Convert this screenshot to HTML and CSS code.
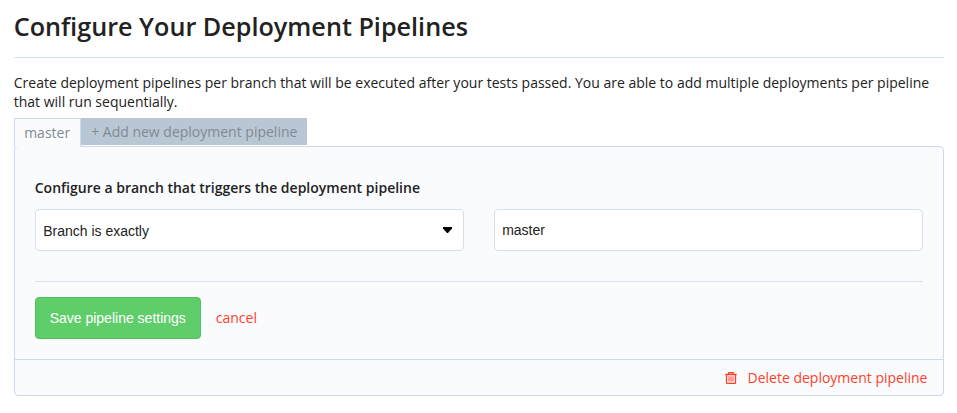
FILE: index.html
```html
<!DOCTYPE html>
<html lang="en">
<head>
<meta charset="utf-8">
<title>Deployment Pipelines</title>
<link rel="stylesheet" href="styles.css">
</head>
<body>
<main class="page">
  <h1 class="title">Configure Your Deployment Pipelines</h1>
  <p class="intro">Create deployment pipelines per branch that will be executed after your tests passed. You are able to add multiple deployments per pipeline that will run sequentially.</p>
  <nav class="tabs">
    <a class="tab tab-active">master</a>
    <a class="tab tab-add">+ Add new deployment pipeline</a>
  </nav>
  <section class="panel">
    <form class="panel-body">
      <h2 class="label">Configure a branch that triggers the deployment pipeline</h2>
      <div class="fields">
        <div class="field select">
          <span>Branch is exactly</span>
          <svg class="caret" width="9" height="6" viewBox="0 0 9 6"><path d="M0 0h9v1.5L5 6H4L0 1.5z"/></svg>
        </div>
        <input class="field" type="text" value="master">
      </div>
      <div class="actions">
        <button class="save" type="button">Save pipeline settings</button>
        <a class="link cancel">cancel</a>
      </div>
    </form>
    <footer class="panel-footer">
      <svg class="trash" width="12" height="12" viewBox="0 0 12 12" fill="none" stroke="currentColor"><path d="M.3 2.5h11.4M3.5 2.5v-1q0-1 1-1h3q1 0 1 1v1M1.5 2.5v8q0 1 1 1h7q1 0 1-1v-8" stroke-width="1.3"/><path d="M4 4.3v5.2M6 4.3v5.2M8 4.3v5.2"/></svg>
      <a class="link">Delete deployment pipeline</a>
    </footer>
  </section>
</main>
</body>
</html>
```
FILE: styles.css
```css
* { box-sizing: border-box; }
body {
  margin: 0;
  background: #fff;
  color: #222;
  font: 14px/19px "Open Sans", sans-serif;
}
.page { width: 930px; margin-left: 13.75px; }
.title {
  height: 58px;
  margin: 0 0 15px;
  padding-top: 9px;
  border-bottom: 1px solid #d7e2ec;
  font-size: 25.2px;
  font-weight: 600;
  line-height: 34px;
}
.intro { margin: 0 0 7px; }
.tabs {
  position: relative;
  z-index: 1;
  display: flex;
  align-items: flex-start;
  height: 28px;
}
.tab { color: #818a93; white-space: nowrap; }
.tab-active {
  height: 29px;
  padding: 4px 9px 0 9.4px;
  width: 67px;
  background: #fafbfd;
  border: 1px solid #cbdaee;
  border-bottom: 0;
}
.tab-add {
  width: 226px;
  height: 27px;
  padding: 4px 0 4px 10.4px;
  background: #b9c7d5;
}
.panel {
  background: #fafbfd;
  border: 1px solid #cbdaee;
  border-radius: 4px;
}
.panel-body { height: 212px; padding: 31px 20px 0; }
.label { margin: 0 0 12px; font-size: 14px; font-weight: 600; line-height: 19px; }
.fields {
  display: grid;
  grid-template-columns: 1fr 1fr;
  gap: 30px;
  height: 73px;
  border-bottom: 1px solid #d7e2ec;
}
.field {
  width: 100%;
  height: 42px;
  padding: 0 7.4px;
  border: 1px solid #d7e0ea;
  border-radius: 4px;
  background: #fff;
  color: #222;
  font: 14px "Liberation Sans", sans-serif;
}
.select {
  display: flex;
  align-items: center;
  justify-content: space-between;
  padding: 2px 11px 0 7.4px;
}
.caret { margin-top: -2px; }
.actions { display: flex; align-items: center; gap: 15px; padding-top: 15px; }
.save {
  width: 166px;
  height: 42px;
  padding: 0;
  border: 1px solid #52c15c;
  border-radius: 4px;
  background: #60cd6b;
  color: #fff;
  font: 14px "Liberation Sans", sans-serif;
}
.link { color: #ff412b; }
.cancel { padding-bottom: 2px; }
.panel-footer {
  display: flex;
  align-items: center;
  justify-content: flex-end;
  gap: 10.5px;
  height: 36px;
  padding: 0 15.3px;
  border-top: 1px solid #cbdaee;
}
.trash { color: #ff412b; }
```
